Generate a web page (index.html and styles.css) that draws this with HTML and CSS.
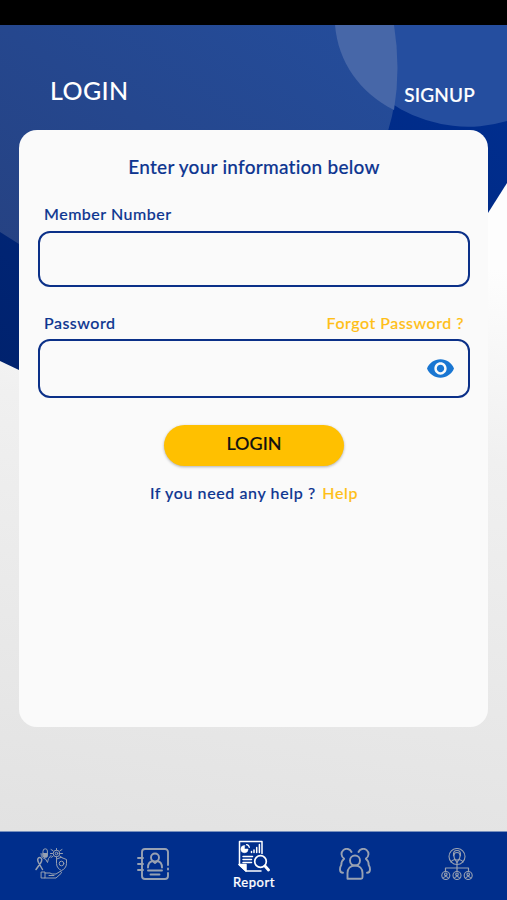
FILE: index.html
```html
<!DOCTYPE html>
<html lang="en">
<head>
    <meta charset="UTF-8">
    <meta name="viewport" content="width=device-width, initial-scale=1.0">
    <title>Login</title>
    <link rel="stylesheet" href="styles.css">
</head>
<body>
    <div class="status-bar"></div>

    <main class="screen">
        <svg class="backdrop" viewBox="0 25 507 806" preserveAspectRatio="none" aria-hidden="true">
            <defs>
                <linearGradient id="navy" x1="0" y1="1" x2="1" y2="0">
                    <stop offset="0" stop-color="#002068"/>
                    <stop offset="1" stop-color="#002f92"/>
                </linearGradient>
                <linearGradient id="sheen" x1="0" y1="1" x2="1" y2="0">
                    <stop offset="0" stop-color="#264180"/>
                    <stop offset="1" stop-color="#244d9c"/>
                </linearGradient>
            </defs>
            <path d="M0 25H507V183L488 213L300 500L19 370L0 361Z" fill="url(#navy)"/>
            <path d="M0 25H394Q403 82 388 131L250 300L19 244L0 232Z" fill="url(#sheen)"/>
            <path d="M335 25A137.7 137.7 0 0 0 507 121V25Z" fill="#254e9f"/>
            <path d="M335 25C338 62 360 93 394 110Q401 68 394 25Z" fill="#4767a8"/>
        </svg>

        <div class="content">
            <header class="tabs">
                <h1>LOGIN</h1>
                <a class="signup">SIGNUP</a>
            </header>

            <form class="card">
                <h2>Enter your information below</h2>

                <div class="label-row">
                    <label for="member">Member Number</label>
                </div>
                <input class="field" type="text" id="member">

                <div class="label-row second">
                    <label for="password">Password</label>
                    <a class="forgot">Forgot Password ?</a>
                </div>
                <div class="field password">
                    <input type="password" id="password">
                    <svg class="eye" viewBox="1 4.5 22 15">
                        <path fill="#1976d2" d="M12 4.5C7 4.5 2.73 7.61 1 12c1.73 4.39 6 7.5 11 7.5s9.27-3.11 11-7.5c-1.73-4.39-6-7.5-11-7.5zM12 17c-2.76 0-5-2.24-5-5s2.24-5 5-5 5 2.24 5 5-2.24 5-5 5zm0-8c-1.66 0-3 1.34-3 3s1.34 3 3 3 3-1.34 3-3-1.34-3-3-3z"/>
                    </svg>
                </div>

                <button type="button" class="login">LOGIN</button>
                <p class="help">If you need any help ? <a>Help</a></p>
            </form>
        </div>
    </main>

    <nav class="bottom-nav">
        <a class="item">
            <svg viewBox="0 0 32 32" stroke-width="1">
                <path d="M8 3a2.200 2.200 0 0 1 4.400 0v4.500a2.200 2.200 0 0 1-4.400 0z"/>
                <path class="solid" d="M8.300 5.500h3.800v3h-3.800z"/>
                <path d="M6 5.500c0 3.500 2 5 4.500 5.500l2 3.500 1-4 2.500-3"/>
                <circle cx="21.500" cy="5.500" r="3.300"/>
                <circle cx="21.500" cy="5.500" r="1.300"/>
                <path d="M16 1.500l2 1.200M15.500 5.500h2M16 9.500l2-1.200M27 1.500l-2 1.200M27.500 5.500h-2M27 9.500l-2-1.200M21.500 .5v1.700M21.500 8.800v1.700"/>
                <path d="M26.500 9.500l5 2v4c0 3.500-2.500 6-5 7-2.500-1-5-3.500-5-7v-4z"/>
                <circle cx="26.500" cy="15.500" r="2.300"/>
                <path stroke-width="1.500" d="M1 21.500l5-7c1.500-3 .5-5-1.300-5s-2.700 2-1.200 5l4 7"/>
                <path d="M6.500 24h3.500v6H6.500zM10 25h5l2 1h4l4-2.500c1.500-.5 2 1 1 2L21 30H10M14 27.500h5"/>
            </svg>
        </a>
        <a class="item">
            <svg viewBox="0 0 32 32" stroke-width="1.900">
                <path d="M31 17V4a3 3 0 0 0-3-3H8a3 3 0 0 0-3 3v24a3 3 0 0 0 3 3h20a3 3 0 0 0 3-3v-3M31 20.500v1"/>
                <path d="M1 10h5M1 16h5M1 22h5"/>
                <circle cx="18" cy="9.500" r="4"/>
                <path d="M11 19.500c0-4 2.500-6 4.500-6.500l2.500 2 2.500-2c2 .5 4.500 2.500 4.500 6.500M11 22.500h14M13.500 26.500h9"/>
            </svg>
        </a>
        <a class="item active">
            <svg viewBox="0 0 32 32" stroke-width="1.500">
                <path d="M24 13.500V1.500H1.500V25L8 31h15"/>
                <path class="solid" d="M1 24.500h7V31z"/>
                <path class="solid" stroke-width=".6" d="M6.500 5.500a3.600 3.600 0 1 0 3.600 3.600H6.500z"/>
                <path stroke-width="1.200" d="M8.500 4.600a3.200 3.200 0 0 1 2.800 2.800"/>
                <path d="M13.500 12.500v-1M16 12.500v-2.500M18.700 12.500V7.500M21.400 12.500V4.500M5 16.500h9.500M5 19.500h8.500M5 22.500h8.500"/>
                <circle cx="22.500" cy="21.500" r="5.800" stroke-width="1.700"/>
                <path d="M27 26l3.500 4" stroke-width="2.800"/>
            </svg>
            <span>Report</span>
        </a>
        <a class="item">
            <svg viewBox="0 0 32 32" stroke-width="1.900">
                <circle cx="16" cy="12.500" r="5"/>
                <path d="M8.500 30.800V25c0-4.500 3-7.500 7.500-7.500s7.500 3 7.500 7.500v4.300a1.500 1.500 0 0 1-1.500 1.500z"/>
                <path d="M12.500 4A5.200 5.200 0 1 0 5 10.500M19.500 4A5.200 5.200 0 1 1 27 10.500M5 11c-2.200 1.500-2.700 3.500-2.700 6-1 1.500-1.300 3-1.300 4.500 0 2 1 3.300 3 3.300M27 11c2.200 1.500 2.700 3.500 2.700 6 1 1.500 1.300 3 1.300 4.500 0 2-1 3.300-3 3.300"/>
            </svg>
        </a>
        <a class="item">
            <svg viewBox="0 0 32 32" stroke-width="1.100">
                <circle cx="16" cy="8.500" r="8"/>
                <path d="M13 7.500a3 3 0 0 1 6 0c0 3-1 4.500-3 4.500s-3-1.500-3-4.500zM12.500 8c-.5-5 1.500-5.500 3.500-5.500s4 .5 3.500 5.500M10 14c1-2 3-2 4-2.500l2 3 2-3c1 .5 3 .5 4 2.500"/>
                <path d="M16 14v9.500M4.500 23.500V20h23v3.500" stroke-width="1.200"/>
                <circle cx="4.800" cy="27.500" r="4"/>
                <circle cx="16" cy="27.500" r="4"/>
                <circle cx="27.200" cy="27.500" r="4"/>
                <circle cx="4.800" cy="26.300" r="1.300"/>
                <circle cx="16" cy="26.300" r="1.300"/>
                <circle cx="27.200" cy="26.300" r="1.300"/>
                <path d="M2.300 30q2.500-3 5 0M13.500 30q2.500-3 5 0M24.700 30q2.500-3 5 0"/>
            </svg>
        </a>
    </nav>
</body>
</html>
```
FILE: styles.css
```css
* {
    box-sizing: border-box;
}
body {
    font-family: Lato, "Liberation Sans", sans-serif;
    font-weight: 500;
    margin: 0;
    height: 900px;
    display: flex;
    flex-direction: column;
    color: #0d3590;
    background-color: #fafafa;
}
.status-bar {
    height: 25px;
    background: #000;
}
.screen {
    height: 806px;
    display: grid;
    background: linear-gradient(188deg, #fdfdfd 28%, #f0f0f0 50%, #e9e9e9 75%, #e2e2e2);
}
/* backdrop and content share the same cell */
.backdrop, .content {
    grid-area: 1 / 1;
}
.backdrop {
    width: 100%;
    height: 806px;
}
.content {
    z-index: 1;
    padding: 0 19px;
}
.tabs {
    height: 105px;
    padding: 50px 13px 0 31px;
    display: flex;
    justify-content: space-between;
    align-items: flex-start;
    color: #fff;
}
.tabs h1 {
    margin: 0;
    font-size: 25px;
    line-height: 30px;
    font-weight: 500;
    letter-spacing: 0.4px;
}
.signup {
    font-size: 19px;
    line-height: 24px;
    margin-top: 8px;
    font-weight: 500;
    -webkit-text-stroke: 0.2px;
    letter-spacing: 0.2px;
}
.card {
    height: 597px;
    padding: 25px 18px 0 19px;
    border-radius: 18px;
    background: #fafafa;
    display: flex;
    flex-direction: column;
    -webkit-text-stroke: 0.15px;
}
.card h2 {
    margin: 0;
    font-size: 19px;
    line-height: 24px;
    font-weight: 500;
    text-align: center;
    letter-spacing: 0.25px;
}
.label-row {
    margin: 25px 6px 7px;
    font-size: 16px;
    line-height: 20px;
    letter-spacing: 0.5px;
    display: flex;
    justify-content: space-between;
}
.label-row.second {
    margin-top: 26px;
    margin-bottom: 6px;
}
.forgot, .help a {
    color: #ffbf18;
}
.field {
    width: 432px;
    height: 56px;
    padding: 0 14px;
    border: 2px solid #0b3088;
    border-radius: 12px;
    background: #fafafa;
}
.password {
    height: 59px;
    display: flex;
    align-items: center;
}
.password input {
    flex: 1;
    border: none;
    background: none;
}
.eye {
    width: 27px;
    height: 19px;
}
.login {
    width: 180px;
    height: 41px;
    margin: 27px auto 0;
    padding: 0 0 5px;
    border: none;
    border-radius: 21px;
    background: #ffc000;
    box-shadow: 0 1px 3px rgba(0, 0, 0, 0.3);
    color: #111;
    font-family: inherit;
    font-size: 18px;
    font-weight: 500;
}
.help {
    margin: 17px 0 0;
    font-size: 16px;
    line-height: 20px;
    letter-spacing: 0.6px;
    text-align: center;
}
.help a {
    margin-left: 2px;
}
.bottom-nav {
    height: 69px;
    border-top: 1px solid #7890bd;
    background: #002e8c;
    display: grid;
    grid-template-columns: repeat(5, 1fr);
}
.item {
    display: flex;
    flex-direction: column;
    align-items: center;
    justify-content: center;
    padding: 0 0 5px 1px;
    color: #98a1b2;
}
.item svg {
    width: 32px;
    height: 32px;
    fill: none;
    stroke: currentColor;
    stroke-linecap: round;
    stroke-linejoin: round;
}
.item .solid {
    fill: currentColor;
}
.item.active {
    justify-content: flex-start;
    padding-top: 8px;
    color: #fff;
}
.item span {
    font-size: 13px;
    line-height: 16px;
    margin-top: 2px;
    letter-spacing: 0.5px;
    -webkit-text-stroke: 0.2px;
}
```
